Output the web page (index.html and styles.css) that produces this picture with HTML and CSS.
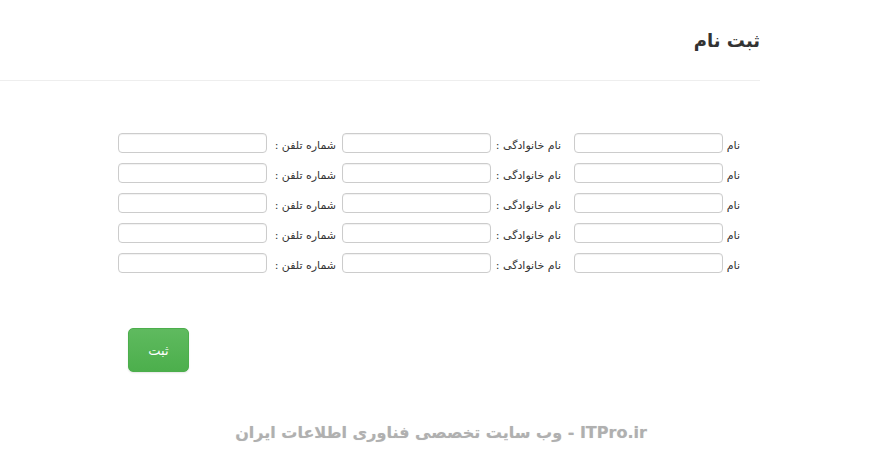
FILE: index.html
```html
<!DOCTYPE html>
<html lang="fa" dir="rtl">
<head>
<meta charset="utf-8">
<title>ثبت نام</title>
<link rel="stylesheet" href="styles.css">
</head>
<body>
<div class="page">
  <div class="header">
    <h1 class="title">ثبت نام</h1>
  </div>
  <form class="form">
    <div class="rows">
      <div class="row">
        <span class="lbl lbl-name">نام</span><input class="field" type="text">
        <span class="lbl lbl-family">نام خانوادگی :</span><input class="field" type="text">
        <span class="lbl lbl-phone">شماره تلفن :</span><input class="field" type="text">
      </div>
      <div class="row">
        <span class="lbl lbl-name">نام</span><input class="field" type="text">
        <span class="lbl lbl-family">نام خانوادگی :</span><input class="field" type="text">
        <span class="lbl lbl-phone">شماره تلفن :</span><input class="field" type="text">
      </div>
      <div class="row">
        <span class="lbl lbl-name">نام</span><input class="field" type="text">
        <span class="lbl lbl-family">نام خانوادگی :</span><input class="field" type="text">
        <span class="lbl lbl-phone">شماره تلفن :</span><input class="field" type="text">
      </div>
      <div class="row">
        <span class="lbl lbl-name">نام</span><input class="field" type="text">
        <span class="lbl lbl-family">نام خانوادگی :</span><input class="field" type="text">
        <span class="lbl lbl-phone">شماره تلفن :</span><input class="field" type="text">
      </div>
      <div class="row">
        <span class="lbl lbl-name">نام</span><input class="field" type="text">
        <span class="lbl lbl-family">نام خانوادگی :</span><input class="field" type="text">
        <span class="lbl lbl-phone">شماره تلفن :</span><input class="field" type="text">
      </div>
    </div>
    <div class="actions">
      <button class="btn" type="button">ثبت</button>
    </div>
  </form>
  <div class="watermark">ITPro.ir - وب سایت تخصصی فناوری اطلاعات ایران</div>
</div>
</body>
</html>
```

FILE: styles.css
```css
html, body {
  margin: 0;
  padding: 0;
  background: #ffffff;
}
body {
  font-family: "DejaVu Sans", "Liberation Sans", sans-serif;
  color: #333333;
  direction: rtl;
}
.page {
  width: 882px;
}
.header {
  width: 760px;
  height: 81px;
  margin-right: auto;
  margin-left: 0;
  border-bottom: 1px solid #eeeeee;
  box-sizing: border-box;
}
.title {
  margin: 0;
  padding-top: 28px;
  font-size: 18px;
  font-weight: bold;
  line-height: 26px;
  color: #333333;
}
.form {
  width: 760px;
  margin: 0 auto 0 0;
}
.rows {
  padding-top: 52px;
  padding-right: 20px;
  display: flex;
  flex-direction: column;
  gap: 10px;
}
.row {
  display: flex;
  align-items: center;
  height: 20px;
}
.lbl {
  font-size: 11px;
  white-space: nowrap;
  color: #333333;
  padding-top: 6px;
  line-height: 14px;
  display: flex;
  justify-content: flex-start;
}
.lbl-name {
  width: 15px;
  margin-left: 2px;
}
.lbl-family {
  width: 65px;
  margin-right: 13px;
  margin-left: 5px;
}
.lbl-phone {
  width: 64px;
  margin-right: 6px;
  margin-left: 5px;
}
.field {
  width: 149px;
  height: 20px;
  box-sizing: border-box;
  border: 1px solid #cccccc;
  border-radius: 4px;
  margin: 0;
  padding: 0 6px;
  background: #ffffff;
  box-shadow: inset 0 1px 1px rgba(0,0,0,0.06);
}
.actions {
  display: flex;
  justify-content: flex-end;
  padding-left: 128px;
  margin-top: 55px;
}
.btn {
  width: 61px;
  height: 44px;
  border: 1px solid #4cae4c;
  border-radius: 5px;
  background: linear-gradient(to bottom, #5fba5f, #4caf4c);
  color: #ffffff;
  font-family: "DejaVu Sans", sans-serif;
  font-size: 13px;
  font-weight: normal;
  padding: 0;
  box-shadow: 0 1px 2px rgba(0,0,0,0.1);
}
.watermark {
  width: 882px;
  text-align: center;
  margin-top: 49px;
  font-family: "DejaVu Sans", "Liberation Sans", sans-serif;
  font-size: 16px;
  font-weight: bold;
  color: #b0b0b0;
  line-height: 24px;
  text-shadow: 0 0 1px #dddddd;
  direction: rtl;
}
```
